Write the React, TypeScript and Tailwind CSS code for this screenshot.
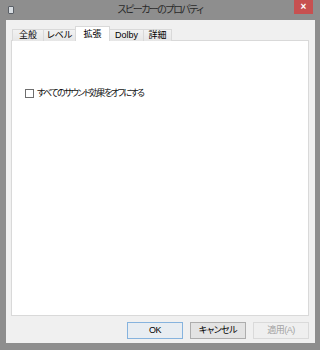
import React from 'react'

const font = "font-['Liberation_Sans','Noto_Sans_CJK_JP',sans-serif] [font-feature-settings:'palt']"

function Tab({ label, w, active }: { label: string; w: string; active?: boolean }) {
    if (active) {
        return (
            <div className={`${w} h-[15px] -ml-px relative z-10 flex items-start justify-center pt-[1px] bg-white border border-b-0 border-[#d9d9d9] text-[9px] leading-[12px] text-black`}>
                {label}
            </div>
        )
    }
    return (
        <div className={`${w} h-[12px] -ml-px first:ml-0 flex items-center justify-center bg-gradient-to-b from-[#f2f2f2] to-[#e6e6e6] border border-b-0 border-[#d9d9d9] text-[9px] leading-[11px] text-black`}>
            {label}
        </div>
    )
}

function Button({ label, primary, disabled }: { label: string; primary?: boolean; disabled?: boolean }) {
    let cls = 'bg-[#e3e3e3] border-[#adadad] text-black'
    if (primary) cls = 'bg-[#e8edf2] border-[#86b3de] text-black'
    if (disabled) cls = 'bg-[#efefef] border-[#dadada] text-[#a3a3a3]'
    return (
        <div className={`w-[56px] h-[17px] flex items-center justify-center border text-[9px] tracking-[-0.5px] ${cls}`}>
            {label}
        </div>
    )
}

export default function App() {
    return (
        <div className={`w-[320px] h-[350px] bg-[#8e8e8e] flex flex-col ${font}`}>
            <div className="h-[20px] flex items-start shrink-0">
                <div className="w-[26px] h-[20px] flex items-start pl-[8px] pt-[6px]">
                    <div className="w-[6px] h-[8px] bg-[#d8dde2] border border-[#5a5f66] rounded-[1px]" />
                </div>
                <div className="flex-1 text-center text-[10px] tracking-[-1.5px] leading-[20px] text-[#2a2a2a]">
                    スピーカーのプロパティ
                </div>
                <div className="w-[26px] h-[20px] flex justify-start">
                    <div className="w-[19px] h-[14px] bg-[#c75050] flex items-center justify-center text-white text-[10px] leading-none font-bold">
                        ×
                    </div>
                </div>
            </div>
            <div className="flex-1 ml-[6px] mr-[5px] mb-[7px] bg-[#f0f0f0] flex flex-col pl-[5px] pr-[6px] pt-[6px]">
                <div className="flex items-end pl-[1px] -mb-px relative z-10 h-[15px]">
                    <Tab label="全般" w="w-[32px]" />
                    <Tab label="レベル" w="w-[33px]" />
                    <Tab label="拡張" w="w-[35px]" active />
                    <Tab label="Dolby" w="w-[35px]" />
                    <Tab label="詳細" w="w-[29px]" />
                </div>
                <div className="h-[276px] bg-white border border-[#d9d9d9] pl-[13px] pt-[46px]">
                    <div className="flex items-center gap-[3px]">
                        <div className="w-[9px] h-[9px] border border-[#6e6e6e] bg-white" />
                        <span className="text-[9px] tracking-[-1.6px] leading-[12px] text-[#111]">すべてのサウンド効果をオフにする</span>
                    </div>
                </div>
                <div className="flex justify-end gap-[7px] pt-[6px]">
                    <Button label="OK" primary />
                    <Button label="キャンセル" />
                    <Button label="適用(A)" disabled />
                </div>
            </div>
        </div>
    )
}
